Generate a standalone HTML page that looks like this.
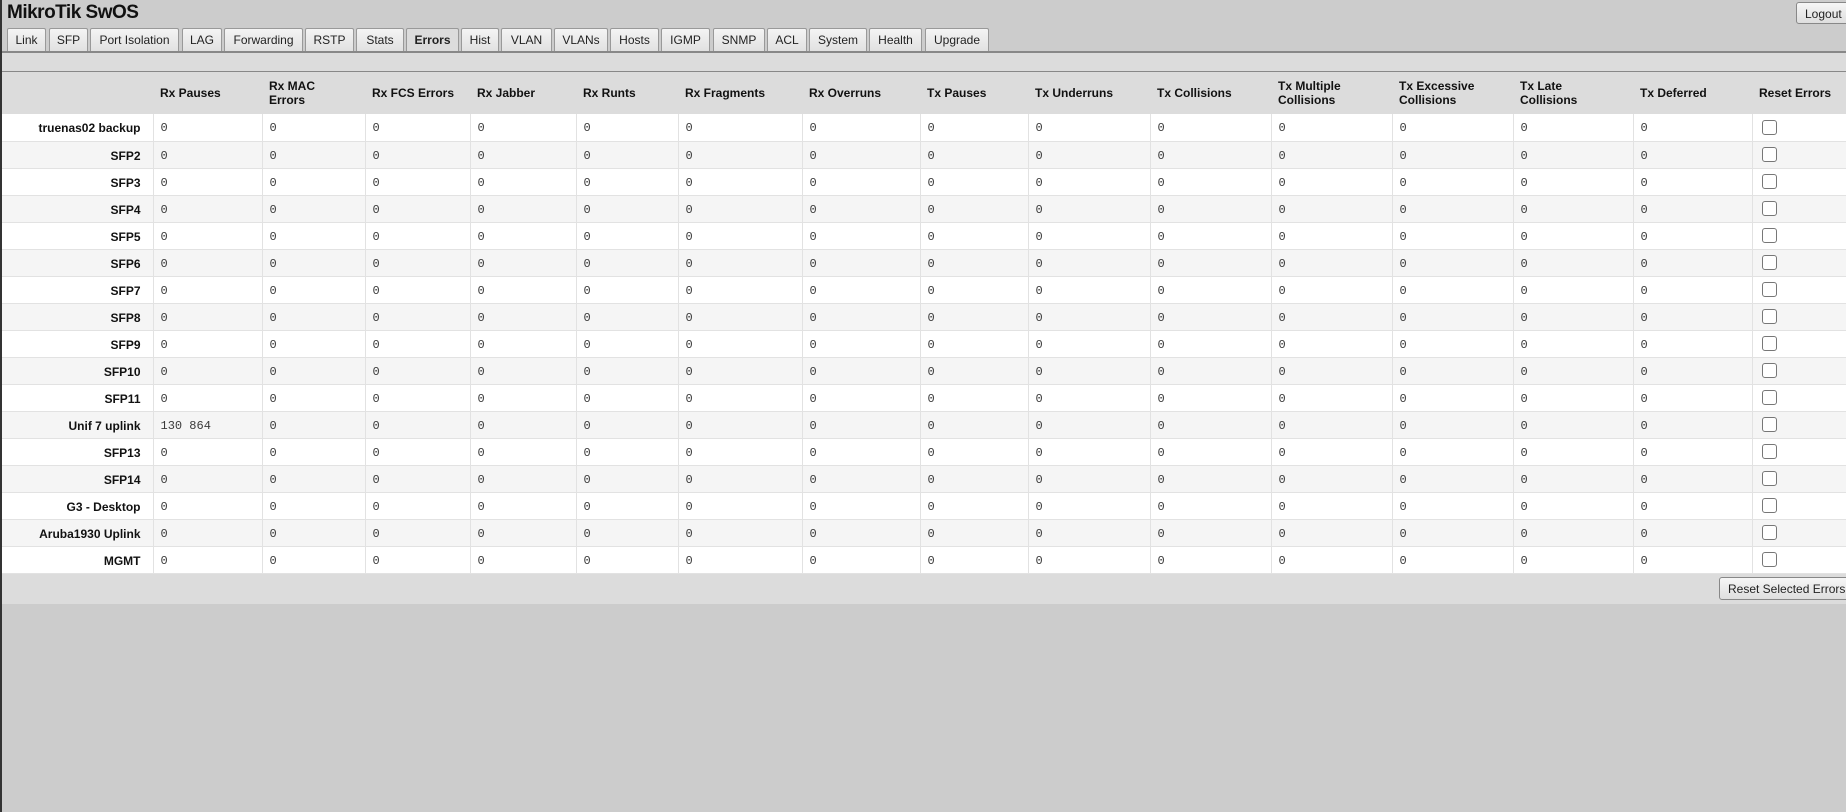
<!DOCTYPE html>
<html><head><meta charset="utf-8"><style>
*{box-sizing:border-box}
body{margin:0;width:1846px;height:812px;background:#cccccc;font-family:"Liberation Sans",sans-serif;overflow:hidden;border-left:2px solid #333;position:relative}
.title{position:absolute;left:5px;top:2px;font-size:19px;font-weight:bold;color:#111;letter-spacing:-0.5px}
.logout{position:absolute;left:1794px;top:2px;width:56px;height:22px;border:1px solid #888;border-radius:3px;background:linear-gradient(#f6f6f6,#dedede);font-size:12px;padding:4px 0 0 8px;color:#222}
.tabs{position:absolute;left:5px;top:28px;height:24px}
.tab{position:absolute;top:0;height:24px;border:1px solid #999;border-bottom:none;background:linear-gradient(#f4f4f4,#e0e0e0);font-size:12px;color:#222;text-align:center;line-height:22px;border-radius:2px 2px 0 0}
.tab.act{background:#dcdcdc;font-weight:bold;height:25px}
.line1{position:absolute;left:0;top:51px;width:1846px;height:2px;background:#888}
.band{position:absolute;left:0;top:53px;width:1846px;height:19px;background:#dcdcdc}
.line2{position:absolute;left:0;top:71px;width:1846px;height:1px;background:#888}
table{position:absolute;left:0;top:72px;border-collapse:collapse;table-layout:fixed;width:1846px}
th{background:#dcdcdc;height:42px;font-size:12px;text-align:left;padding:0 0 0 7px;color:#111;line-height:14px}
td{height:27px;font-family:"Liberation Mono",monospace;font-size:12px;color:#3a3a3a;padding:2px 0 0 7px;border-left:1px solid #e2e2e2;border-bottom:1px solid #e2e2e2}
td.l{font-family:"Liberation Sans",sans-serif;font-weight:bold;font-size:12px;color:#111;text-align:right;padding-right:12px;border-left:none}
tr:nth-child(odd) td{background:#fff}
tr:nth-child(even) td{background:#f5f5f5}
.cb{display:inline-block;width:15px;height:15px;border:1px solid #777;border-radius:3px;background:#fff;margin-left:2px;margin-top:-2px;vertical-align:middle}
.bar{position:absolute;left:0;top:574px;width:1846px;height:30px;background:#dcdcdc}
.rse{position:absolute;left:1717px;top:577px;width:135px;height:23px;border:1px solid #888;border-radius:3px;background:linear-gradient(#f6f6f6,#dedede);font-size:12px;padding:4px 0 0 8px;color:#222;white-space:nowrap}
</style></head><body>
<div class="title">MikroTik SwOS</div>
<div class="logout">Logout</div>
<div class="tabs">
<div class="tab" style="left:0;width:39px">Link</div>
<div class="tab" style="left:42px;width:39px">SFP</div>
<div class="tab" style="left:83px;width:89px">Port Isolation</div>
<div class="tab" style="left:175px;width:40px">LAG</div>
<div class="tab" style="left:217px;width:79px">Forwarding</div>
<div class="tab" style="left:298px;width:49px">RSTP</div>
<div class="tab" style="left:349px;width:48px">Stats</div>
<div class="tab act" style="left:399px;width:53px">Errors</div>
<div class="tab" style="left:454px;width:38px">Hist</div>
<div class="tab" style="left:494px;width:51px">VLAN</div>
<div class="tab" style="left:547px;width:54px">VLANs</div>
<div class="tab" style="left:603px;width:49px">Hosts</div>
<div class="tab" style="left:654px;width:49px">IGMP</div>
<div class="tab" style="left:706px;width:52px">SNMP</div>
<div class="tab" style="left:760px;width:40px">ACL</div>
<div class="tab" style="left:802px;width:58px">System</div>
<div class="tab" style="left:862px;width:53px">Health</div>
<div class="tab" style="left:918px;width:64px">Upgrade</div>
</div>
<div class="line1"></div><div class="band"></div><div class="line2"></div>
<table>
<colgroup><col style="width:151px"><col style="width:109px"><col style="width:103px"><col style="width:105px"><col style="width:106px"><col style="width:102px"><col style="width:124px"><col style="width:118px"><col style="width:108px"><col style="width:122px"><col style="width:121px"><col style="width:121px"><col style="width:121px"><col style="width:120px"><col style="width:119px"><col style="width:96px"></colgroup>
<thead><tr><th></th><th>Rx Pauses</th><th>Rx MAC<br>Errors</th><th>Rx FCS Errors</th><th>Rx Jabber</th><th>Rx Runts</th><th>Rx Fragments</th><th>Rx Overruns</th><th>Tx Pauses</th><th>Tx Underruns</th><th>Tx Collisions</th><th>Tx Multiple<br>Collisions</th><th>Tx Excessive<br>Collisions</th><th>Tx Late<br>Collisions</th><th>Tx Deferred</th><th>Reset Errors</th></tr></thead>
<tbody>
<tr><td class="l">truenas02 backup</td><td>0</td><td>0</td><td>0</td><td>0</td><td>0</td><td>0</td><td>0</td><td>0</td><td>0</td><td>0</td><td>0</td><td>0</td><td>0</td><td>0</td><td><span class="cb"></span></td></tr>
<tr><td class="l">SFP2</td><td>0</td><td>0</td><td>0</td><td>0</td><td>0</td><td>0</td><td>0</td><td>0</td><td>0</td><td>0</td><td>0</td><td>0</td><td>0</td><td>0</td><td><span class="cb"></span></td></tr>
<tr><td class="l">SFP3</td><td>0</td><td>0</td><td>0</td><td>0</td><td>0</td><td>0</td><td>0</td><td>0</td><td>0</td><td>0</td><td>0</td><td>0</td><td>0</td><td>0</td><td><span class="cb"></span></td></tr>
<tr><td class="l">SFP4</td><td>0</td><td>0</td><td>0</td><td>0</td><td>0</td><td>0</td><td>0</td><td>0</td><td>0</td><td>0</td><td>0</td><td>0</td><td>0</td><td>0</td><td><span class="cb"></span></td></tr>
<tr><td class="l">SFP5</td><td>0</td><td>0</td><td>0</td><td>0</td><td>0</td><td>0</td><td>0</td><td>0</td><td>0</td><td>0</td><td>0</td><td>0</td><td>0</td><td>0</td><td><span class="cb"></span></td></tr>
<tr><td class="l">SFP6</td><td>0</td><td>0</td><td>0</td><td>0</td><td>0</td><td>0</td><td>0</td><td>0</td><td>0</td><td>0</td><td>0</td><td>0</td><td>0</td><td>0</td><td><span class="cb"></span></td></tr>
<tr><td class="l">SFP7</td><td>0</td><td>0</td><td>0</td><td>0</td><td>0</td><td>0</td><td>0</td><td>0</td><td>0</td><td>0</td><td>0</td><td>0</td><td>0</td><td>0</td><td><span class="cb"></span></td></tr>
<tr><td class="l">SFP8</td><td>0</td><td>0</td><td>0</td><td>0</td><td>0</td><td>0</td><td>0</td><td>0</td><td>0</td><td>0</td><td>0</td><td>0</td><td>0</td><td>0</td><td><span class="cb"></span></td></tr>
<tr><td class="l">SFP9</td><td>0</td><td>0</td><td>0</td><td>0</td><td>0</td><td>0</td><td>0</td><td>0</td><td>0</td><td>0</td><td>0</td><td>0</td><td>0</td><td>0</td><td><span class="cb"></span></td></tr>
<tr><td class="l">SFP10</td><td>0</td><td>0</td><td>0</td><td>0</td><td>0</td><td>0</td><td>0</td><td>0</td><td>0</td><td>0</td><td>0</td><td>0</td><td>0</td><td>0</td><td><span class="cb"></span></td></tr>
<tr><td class="l">SFP11</td><td>0</td><td>0</td><td>0</td><td>0</td><td>0</td><td>0</td><td>0</td><td>0</td><td>0</td><td>0</td><td>0</td><td>0</td><td>0</td><td>0</td><td><span class="cb"></span></td></tr>
<tr><td class="l">Unif 7 uplink</td><td>130 864</td><td>0</td><td>0</td><td>0</td><td>0</td><td>0</td><td>0</td><td>0</td><td>0</td><td>0</td><td>0</td><td>0</td><td>0</td><td>0</td><td><span class="cb"></span></td></tr>
<tr><td class="l">SFP13</td><td>0</td><td>0</td><td>0</td><td>0</td><td>0</td><td>0</td><td>0</td><td>0</td><td>0</td><td>0</td><td>0</td><td>0</td><td>0</td><td>0</td><td><span class="cb"></span></td></tr>
<tr><td class="l">SFP14</td><td>0</td><td>0</td><td>0</td><td>0</td><td>0</td><td>0</td><td>0</td><td>0</td><td>0</td><td>0</td><td>0</td><td>0</td><td>0</td><td>0</td><td><span class="cb"></span></td></tr>
<tr><td class="l">G3 - Desktop</td><td>0</td><td>0</td><td>0</td><td>0</td><td>0</td><td>0</td><td>0</td><td>0</td><td>0</td><td>0</td><td>0</td><td>0</td><td>0</td><td>0</td><td><span class="cb"></span></td></tr>
<tr><td class="l">Aruba1930 Uplink</td><td>0</td><td>0</td><td>0</td><td>0</td><td>0</td><td>0</td><td>0</td><td>0</td><td>0</td><td>0</td><td>0</td><td>0</td><td>0</td><td>0</td><td><span class="cb"></span></td></tr>
<tr><td class="l">MGMT</td><td>0</td><td>0</td><td>0</td><td>0</td><td>0</td><td>0</td><td>0</td><td>0</td><td>0</td><td>0</td><td>0</td><td>0</td><td>0</td><td>0</td><td><span class="cb"></span></td></tr>
</tbody></table>
<div class="bar"></div>
<div class="rse">Reset Selected Errors</div>
</body></html>
